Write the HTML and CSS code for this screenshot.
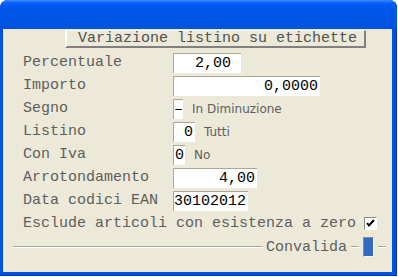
FILE: index.html
```html
<html>
  <head>
    <title>Variazione listino su etichette</title>
    <meta content="text/html;charset=utf-8" http-equiv="Content-Type" />
    <link rel="stylesheet" href="styles.css">
  </head>
  <body>
    <div class="window">
      <div class="titlebar"></div>
      <div class="client">
        <div class="caption">Variazione listino su etichette</div>
        <div class="form">
          <div class="row">
            <span class="label">Percentuale</span>
            <span class="field num wide-pad f-perc">2,00</span>
          </div>
          <div class="row">
            <span class="label">Importo</span>
            <span class="field num f-imp">0,0000</span>
          </div>
          <div class="row">
            <span class="label">Segno</span>
            <span class="field f-segno">&ndash;</span>
            <span class="note">In Diminuzione</span>
          </div>
          <div class="row">
            <span class="label">Listino</span>
            <span class="field num f-list">0</span>
            <span class="note">Tutti</span>
          </div>
          <div class="row">
            <span class="label">Con Iva</span>
            <span class="field f-iva">0</span>
            <span class="note">No</span>
          </div>
          <div class="row">
            <span class="label">Arrotondamento</span>
            <span class="field num f-arr">4,00</span>
          </div>
          <div class="row">
            <span class="label">Data codici EAN</span>
            <span class="field f-data">30102012</span>
          </div>
          <div class="row">
            <span class="label-free">Esclude articoli con esistenza a zero</span>
            <span class="check">
              <svg width="9" height="9" viewBox="0 0 9 9"><path d="M1 4 L3 6.5 L8 1" fill="none" stroke="#000" stroke-width="2"/></svg>
            </span>
          </div>
        </div>
        <div class="footer">
          <span class="rule grow"></span>
          <span class="footer-label">Convalida</span>
          <span class="rule tick"></span>
          <span class="ok-btn"></span>
          <span class="rule tick"></span>
        </div>
      </div>
    </div>
  </body>
</html>
```

FILE: styles.css
```css
html,
body {
  margin: 0;
  padding: 0;
  background-color: #ffffff;
}
.window {
  width: 397px;
  height: 276px;
  display: flex;
  flex-direction: column;
  background: #0053e1;
  border-radius: 8px 8px 0 0;
  box-shadow: inset 0 -1px 0 #0831b0, inset -1px 0 0 #0831b0;
}
.titlebar {
  height: 29px;
  border-radius: 8px 8px 0 0;
  background: linear-gradient(#3b8cff 0, #0a5fff 3px, #0058ee 6px, #0055e5 60%, #0052e0 100%);
}
.client {
  flex-grow: 1;
  margin: 0 5px 4px 3px;
  padding-left: 20px;
  background-color: #ece9d8;
  font-family: 'Liberation Mono', monospace;
  font-size: 15px;
  color: #5e5e5e;
}
.caption {
  margin: 1px 0 0 42px;
  width: 301px;
  height: 18px;
  box-sizing: border-box;
  line-height: 16px;
  padding-left: 11px;
  border-top: 1px solid #ffffff;
  border-left: 2px solid #ffffff;
  border-right: 2px solid #808080;
  border-bottom: 2px solid #808080;
  color: #505050;
}
.form {
  margin-top: 3px;
}
.row {
  height: 23px;
  display: flex;
  align-items: center;
}
.label {
  width: 150px;
  flex-shrink: 0;
}
.label-free {
  margin-right: 8px;
}
.field {
  height: 20px;
  box-sizing: border-box;
  background-color: #ffffff;
  border-top: 1px solid #aca899;
  border-left: 1px solid #aca899;
  color: #000000;
  line-height: 19px;
  overflow: hidden;
}
.num {
  text-align: right;
  padding-right: 2px;
}
.wide-pad {
  padding-right: 10px;
}
.f-perc { width: 68px; }
.f-imp { width: 147px; }
.f-segno { width: 10px; }
.f-list { width: 22px; }
.f-iva { width: 12px; padding-left: 1px; }
.f-arr { width: 84px; }
.f-data { width: 75px; }
.note {
  margin-left: 9px;
  font-family: 'DejaVu Sans', sans-serif;
  font-size: 12px;
  color: #5e5e5e;
}
.check {
  width: 13px;
  height: 13px;
  box-sizing: border-box;
  border-top: 1px solid #8e8b7f;
  border-left: 1px solid #8e8b7f;
  border-right: 1px solid #ffffff;
  border-bottom: 1px solid #ffffff;
  background-color: #ffffff;
  display: flex;
  align-items: center;
  justify-content: center;
}
.footer {
  height: 24px;
  margin-left: -10px;
  display: flex;
  align-items: center;
}
.rule {
  height: 2px;
  border-top: 1px solid #aca899;
  border-bottom: 1px solid #ffffff;
  box-sizing: border-box;
}
.grow {
  flex-grow: 1;
}
.footer-label {
  margin: 0 4px 0 3px;
}
.tick {
  width: 8px;
}
.ok-btn {
  width: 11px;
  height: 20px;
  margin: 0 4px;
  box-sizing: border-box;
  background-color: #316ac5;
  border-top: 1px solid #8e8b7f;
  border-left: 1px solid #8e8b7f;
  border-right: 1px solid #fff8d0;
  border-bottom: 1px solid #fff8d0;
}
.footer .tick:last-child {
  margin-right: 6px;
}
```
